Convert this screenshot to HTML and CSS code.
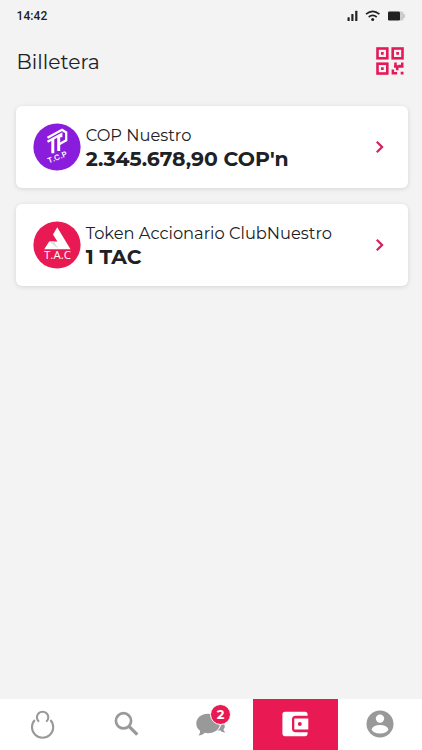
FILE: index.html
```html
<!DOCTYPE html>
<html lang="es">
<head>
    <meta charset="UTF-8">
    <meta name="viewport" content="width=device-width, initial-scale=1.0">
    <title>Billetera</title>
    <link rel="stylesheet" href="styles.css">
</head>
<body>
<div class="status-bar">
    <span class="time">14:42</span>
    <svg class="status-icons" width="60" height="12" viewBox="0 0 60 12">
        <g fill="#222">
            <rect x="0.5" y="7.3" width="2.2" height="3.7" rx=".5"/>
            <rect x="4.3" y="4" width="2.2" height="7" rx=".5"/>
            <rect x="8.2" y="0.7" width="2.2" height="10.3" rx=".5"/>
            <circle cx="25.7" cy="9.6" r="1.5"/>
            <rect x="41" y="1.5" width="12" height="9" rx="1.3"/>
        </g>
        <path d="M19 4.2q6.7-5.6 13.4 0M21.7 7q4-3.2 8 0" fill="none" stroke="#222" stroke-width="1.7"/>
        <path d="M53 1.5h2q1.5 0 1.5 1.5v6q0 1.5-1.5 1.5h-2zM56.5 4h1.5v4h-1.5z" fill="#ccc"/>
    </svg>
</div>

<div class="header">
    <h1>Billetera</h1>
    <svg class="qr" width="28" height="28" viewBox="0 0 28 28">
        <g fill="none" stroke="#e5195a" stroke-width="2.6">
            <rect x="1.5" y="1.5" width="9.8" height="9.8"/>
            <rect x="16.7" y="1.5" width="9.8" height="9.8"/>
            <rect x="1.5" y="16.7" width="9.8" height="9.8"/>
        </g>
        <path fill="#e5195a" d="M5 5h2.700v2.700H5zM20.300 5H23v2.700h-2.700zM5 20.300h2.700V23H5zM18.200 15.500h2.600v2.700h-2.600zM25 15.500h2.500v5.300h-5v2.400h-2.600v-2.400H18v-2.500h4.500v-.6H25zM15.600 22.500h2.500v2.400h3v2.700h-5.500zM24.700 24.800h2.800v2.800h-2.800z"/>
    </svg>
</div>

<div class="cards">
    <div class="card">
        <svg class="coin" width="48" height="48" viewBox="0 0 48 48">
            <circle cx="24" cy="24" r="23.6" fill="#8a1ddb"/>
            <g fill="none" stroke="#fff">
                <path d="M14.500 14.700 29 6.800l4.200 2.700v7.800l-7 3.900" stroke-width="2.300"/>
                <path d="M14.500 18.700l13.700-7.400v3" stroke-width="2.400"/>
                <path d="M19.800 16v14.300" stroke-width="3"/>
                <path d="M25.700 13v15" stroke-width="3"/>
            </g>
            <text class="coin-text" x="15.700" y="40.600" font-size="7.500" textLength="20.500" lengthAdjust="spacingAndGlyphs" transform="rotate(-22 15.700 40.600)">T.C.P</text>
        </svg>
        <div class="info">
            <div class="name">COP Nuestro</div>
            <div class="amount">2.345.678,90 COP'n</div>
        </div>
        <svg class="arrow" width="10" height="14" viewBox="0 0 10 14"><path d="M1.800 1.700 7.100 7l-5.300 5.300"/></svg>
    </div>
    <div class="card">
        <svg class="coin" width="48" height="48" viewBox="0 0 48 48">
            <circle cx="24" cy="24" r="23.6" fill="#e91954"/>
            <path fill="#fff" d="M24.200 6.300 37.500 28.300H11.200l5-7.800h8.200l-4.400-6.900z"/>
            <path fill="#ddd" d="M16.300 20.500h4.400l5 7.800z"/>
            <text class="coin-text tac" x="11" y="37.600" font-size="11.500" textLength="27" lengthAdjust="spacingAndGlyphs">T.A.C</text>
        </svg>
        <div class="info">
            <div class="name">Token Accionario ClubNuestro</div>
            <div class="amount">1 TAC</div>
        </div>
        <svg class="arrow" width="10" height="14" viewBox="0 0 10 14"><path d="M1.800 1.700 7.100 7l-5.300 5.300"/></svg>
    </div>
</div>

<div class="nav">
    <div class="tab">
        <svg width="28" height="30" viewBox="0 0 28 30">
            <path d="M11 12.800A5.700 5.700 0 1 1 18.200 12.800M6.800 11A10.600 10.600 0 1 0 22.400 11" fill="none" stroke="#999" stroke-width="2.100"/>
        </svg>
    </div>
    <div class="tab">
        <svg width="28" height="28" viewBox="0 0 28 28" fill="none" stroke="#999">
            <circle cx="10.500" cy="10.800" r="7.600" stroke-width="2.700"/>
            <path d="M16 16.300l8.300 8.300" stroke-width="3.300"/>
        </svg>
    </div>
    <div class="tab">
        <div class="chat">
            <svg width="32" height="28" viewBox="0 0 32 28" fill="#999">
                <path d="M13 3.800C6 3.800 1.300 8.200 1.300 13.500c0 3 1.300 5.600 3.700 7.300.2 1.800-.4 3.300-1.600 4.700 2.700 0 4.700-1 6.200-2.700 1.100.3 2.200.4 3.400.4 7 0 12-4.200 12-9.700S20 3.800 13 3.800z"/>
                <path d="M26.500 11c4.500 4 3.600 6.800 2 8.200.2 1.300.9 2.400 1.900 3.300-2.200.1-4-.7-5.400-2.200l-2.600.7c3.100-3 4.100-6 4.100-10z"/>
            </svg>
            <span class="badge">2</span>
        </div>
    </div>
    <div class="tab active">
        <svg width="28" height="26" viewBox="0 0 28 26">
            <path fill="#fff" d="M4 .8h20c1.600 0 2.600 1 2.600 2.600v1.400H14.500C12.400 4.800 11 6.300 11 8.300v9.400c0 2 1.400 3.500 3.500 3.500h12.100v1.400c0 1.600-1 2.600-2.600 2.600H4c-1.600 0-2.600-1-2.600-2.600V3.400C1.400 1.800 2.400.8 4 .8z"/>
            <path fill="#fff" fill-rule="evenodd" d="M13.300 7.600h14v10.800h-14zM18.800 11a2 2 0 1 0 0 4 2 2 0 0 0 0-4z"/>
        </svg>
    </div>
    <div class="tab">
        <svg width="28" height="28" viewBox="0 0 28 28">
            <circle cx="14" cy="14" r="13.500" fill="#999"/>
            <circle cx="14" cy="8.600" r="4.200" fill="#fff"/>
            <ellipse cx="14" cy="19.300" rx="8.200" ry="4.300" fill="#fff"/>
        </svg>
    </div>
</div>
</body>
</html>
```
FILE: styles.css
```css
* {
    box-sizing: border-box;
}
body {
    margin: 0;
    height: 100vh;
    display: flex;
    flex-direction: column;
    overflow: hidden;
    background-color: #f3f3f3;
    color: #202124;
    font-family: Montserrat, Inter, sans-serif;
}
svg {
    display: block;
    flex-shrink: 0;
}
.status-bar {
    height: 32px;
    padding: 0 15px 0 16.5px;
    display: flex;
    align-items: center;
    justify-content: space-between;
}
.time {
    font-family: Roboto, sans-serif;
    font-size: 12px;
    font-weight: 500;
    letter-spacing: 0.1px;
}
.header {
    height: 58px;
    padding: 0 18.5px 0 16.5px;
    display: flex;
    align-items: center;
    justify-content: space-between;
}
h1 {
    margin: 0;
    font-size: 20.3px;
    font-weight: 400;
}
.cards {
    flex: 1;
    padding: 16px 14.5px 0 16px;
    display: flex;
    flex-direction: column;
    gap: 16.5px;
}
.card {
    height: 81.5px;
    padding: 0 23px 0 17px;
    display: flex;
    align-items: center;
    background: white;
    border-radius: 6px;
    box-shadow: 0 1px 5px rgba(0, 0, 0, 0.12);
}
.info {
    flex: 1;
    margin-left: 4.7px;
    padding-top: 1px;
    white-space: nowrap;
}
.name {
    font-size: 16.3px;
    font-weight: 400;
    line-height: 24px;
}
.amount {
    font-size: 20.4px;
    font-weight: 700;
    line-height: 24px;
}
.coin-text {
    fill: white;
    font-family: Inter, sans-serif;
    font-weight: 600;
}
.tac {
    font-family: "Open Sans", sans-serif;
    font-weight: 400;
}
.arrow path {
    fill: none;
    stroke: #d91e5b;
    stroke-width: 2.2;
}
.nav {
    height: 51px;
    display: flex;
    background: white;
}
.tab {
    flex: 1;
    padding-bottom: 1px;
    display: flex;
    align-items: center;
    justify-content: center;
}
.active {
    background: #e91954;
}
.chat {
    position: relative;
}
.badge {
    position: absolute;
    top: -6px;
    right: -4px;
    width: 21px;
    height: 21px;
    border: 1px solid white;
    border-radius: 50%;
    background: #e91954;
    color: white;
    font-size: 13px;
    font-weight: 700;
    line-height: 19px;
    text-align: center;
}
```
